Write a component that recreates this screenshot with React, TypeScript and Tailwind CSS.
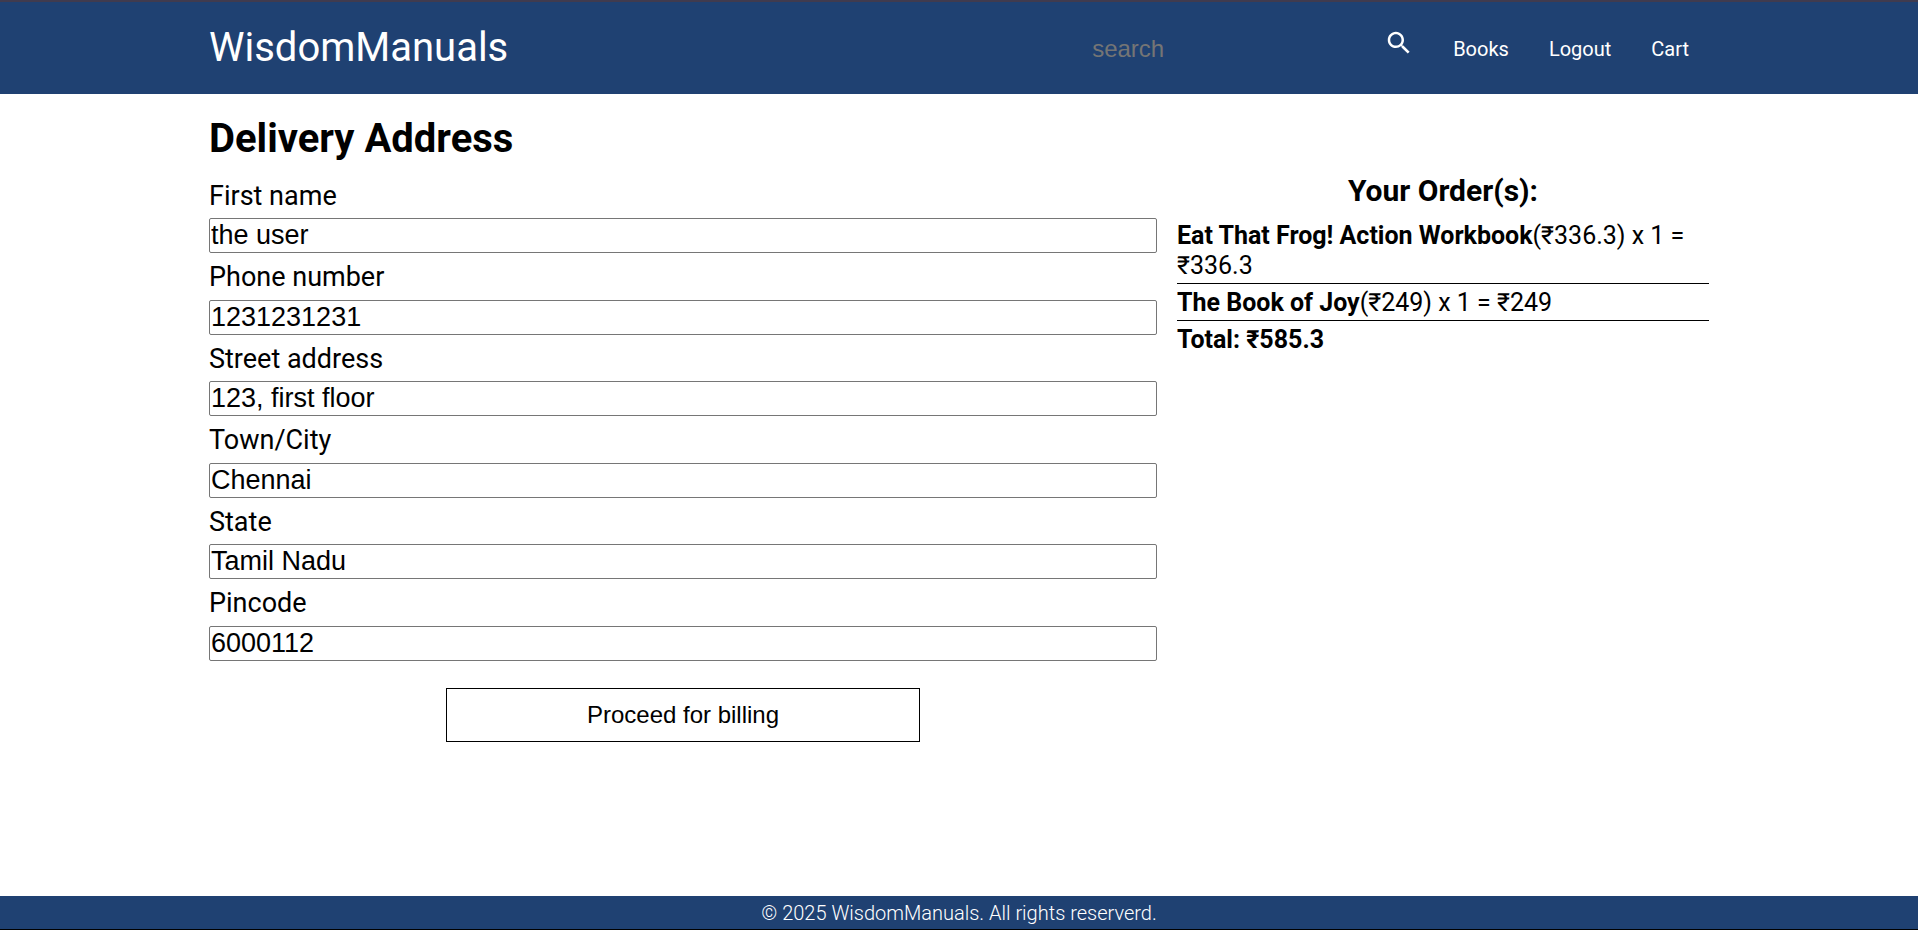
import React from "react";

type Field = { label: string; value: string };
type Order = { title: string; price: string; quantity: number; amount: string };

const fields: Field[] = [
  { label: "First name", value: "the user" },
  { label: "Phone number", value: "1231231231" },
  { label: "Street address", value: "123, first floor" },
  { label: "Town/City", value: "Chennai" },
  { label: "State", value: "Tamil Nadu" },
  { label: "Pincode", value: "6000112" },
];

const orders: Order[] = [
  { title: "Eat That Frog! Action Workbook", price: "336.3", quantity: 1, amount: "336.3" },
  { title: "The Book of Joy", price: "249", quantity: 1, amount: "249" },
];

function Header() {
  return (
    <header className="h-[94px] shrink-0 border-t-2 border-[#403b4f] bg-[#1f4172] text-white">
      <div className="mx-auto flex h-full w-[1500px] items-start justify-between">
        <a className="pt-[22px] text-[40px] leading-[47px]">WisdomManuals</a>
        <div className="flex items-start pr-5">
          <input
            placeholder="search"
            className="mt-[28px] h-[37px] w-[292px] bg-transparent px-0.5 font-['Liberation_Sans',sans-serif] text-[24px] placeholder:text-[#757575]"
          />
          <svg viewBox="0 0 24 24" className="mt-[26px] ml-[2px] h-[30px] w-[30px] fill-white">
            <path d="M15.5 14h-.79l-.28-.27C15.41 12.59 16 11.11 16 9.5 16 5.91 13.09 3 9.5 3S3 5.91 3 9.5 5.91 16 9.5 16c1.61 0 3.09-.59 4.23-1.57l.27.28v.79l5 4.99L20.49 19l-4.99-5zm-6 0C7.01 14 5 11.99 5 9.5S7.01 5 9.5 5 14 7.01 14 9.5 11.99 14 9.5 14z" />
          </svg>
          <nav className="mt-[35px] ml-[39px] flex gap-10 text-[20px] leading-[24px]">
            <a>Books</a>
            <a>Logout</a>
            <a>Cart</a>
          </nav>
        </div>
      </div>
    </header>
  );
}

function AddressForm() {
  return (
    <form className="w-[948px]">
      {fields.map((field) => (
        <label key={field.label} className="block h-[81.5px]">
          <span className="block pt-[7.5px] pb-[6.5px] text-[27px] leading-[32px]">{field.label}</span>
          <input
            defaultValue={field.value}
            className="block h-[35px] w-full rounded-[2px] border border-[#767676] px-px font-['Liberation_Sans',sans-serif] text-[27px]"
          />
        </label>
      ))}
      <button
        type="button"
        className="mx-auto mt-[27px] block h-[54px] w-[474px] border border-black font-['Liberation_Sans',sans-serif] text-[24px]"
      >
        Proceed for billing
      </button>
    </form>
  );
}

function OrderSummary() {
  return (
    <section className="w-[532px] pt-px text-[25px] leading-[30px]">
      <h2 className="text-center text-[30px] leading-[36px] font-bold">Your Order(s):</h2>
      <ul className="mt-[8px]">
        {orders.map((order) => (
          <li key={order.title} className="border-b border-black pt-[4px] pb-[2px]">
            <b>{order.title}</b>(₹{order.price}) x {order.quantity} = ₹{order.amount}
          </li>
        ))}
      </ul>
      <p className="pt-[4px] font-bold">Total: ₹585.3</p>
    </section>
  );
}

export default function App() {
  return (
    <div className="flex h-screen flex-col bg-white font-[Roboto,sans-serif] text-black">
      <Header />
      <main className="mx-auto w-[1500px] flex-1">
        <h1 className="pt-[21px] text-[40px] leading-[47px] font-bold">Delivery Address</h1>
        <div className="mt-[10px] flex items-start gap-5">
          <AddressForm />
          <OrderSummary />
        </div>
      </main>
      <footer className="h-[34px] border-b border-black bg-[#1f4172] text-center text-[20px] leading-[34px] font-light text-white">
        © 2025 WisdomManuals. All rights reserverd.
      </footer>
    </div>
  );
}
